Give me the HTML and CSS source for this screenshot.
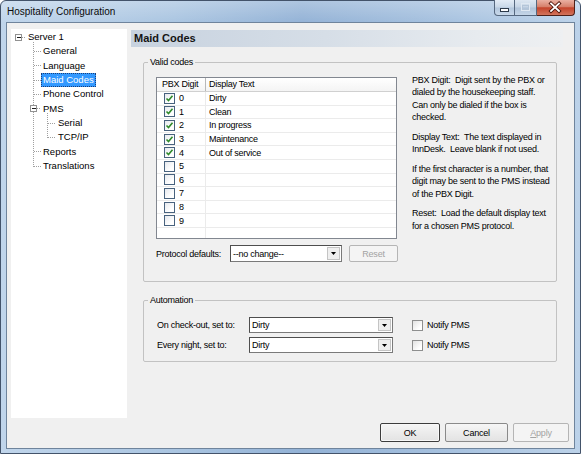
FILE: index.html
```html
<!DOCTYPE html>
<html>
<head>
<meta charset="utf-8">
<title>Hospitality Configuration</title>
<link rel="stylesheet" href="styles.css">
</head>
<body>
<div class="window">
  <div class="titlebar">
    <span class="title">Hospitality Configuration</span>
    <div class="caption-buttons">
      <span class="cb cb-min"><svg width="19" height="15" viewBox="0 0 19 15"><rect x="5.5" y="8.5" width="8" height="3" fill="#fff" stroke="#2d3a4a"/></svg></span>
      <span class="cb cb-max"><svg width="21" height="15" viewBox="0 0 21 15"><rect x="6.5" y="3.5" width="8" height="7" fill="none" stroke="#dfe8f2"/><rect x="7.5" y="5.5" width="6" height="4" fill="none" stroke="#b4c5d8"/></svg></span>
      <span class="cb cb-close"><svg width="37" height="15" viewBox="0 0 37 15"><path d="M14 3.5 L22 11 M22 3.5 L14 11" stroke="#4b1208" stroke-width="3.6" stroke-linecap="square"/><path d="M14 3.5 L22 11 M22 3.5 L14 11" stroke="#fff" stroke-width="1.8" stroke-linecap="square"/></svg></span>
    </div>
  </div>
  <div class="client">
    <div class="top">
      <div class="tree">
        <svg class="tree-lines" width="116" height="160" viewBox="0 0 116 160" shape-rendering="crispEdges">
          <g stroke="#a0a0a0" stroke-dasharray="1 1" fill="none">
            <line x1="11" y1="8.5" x2="15" y2="8.5"/>
            <line x1="22.5" y1="13" x2="22.5" y2="138"/>
            <line x1="23" y1="22.5" x2="30" y2="22.5"/>
            <line x1="23" y1="36.5" x2="30" y2="36.5"/>
            <line x1="23" y1="51.5" x2="30" y2="51.5"/>
            <line x1="23" y1="65.5" x2="30" y2="65.5"/>
            <line x1="26" y1="79.5" x2="30" y2="79.5"/>
            <line x1="23" y1="122.5" x2="30" y2="122.5"/>
            <line x1="23" y1="137.5" x2="30" y2="137.5"/>
            <line x1="36.5" y1="84" x2="36.5" y2="109"/>
            <line x1="37" y1="94.5" x2="45" y2="94.5"/>
            <line x1="37" y1="108.5" x2="45" y2="108.5"/>
          </g>
          <rect x="4.5" y="5.5" width="6" height="6" fill="#fff" stroke="#929292"/>
          <line x1="6" y1="8.5" x2="10" y2="8.5" stroke="#1e1e1e"/>
          <rect x="19.5" y="76.5" width="6" height="6" fill="#fff" stroke="#929292"/>
          <line x1="21" y1="79.5" x2="25" y2="79.5" stroke="#1e1e1e"/>
        </svg>
        <div class="node l0"><span class="lbl">Server 1</span></div>
        <div class="node l1"><span class="lbl">General</span></div>
        <div class="node l1"><span class="lbl">Language</span></div>
        <div class="node l1 sel"><span class="lbl">Maid Codes</span></div>
        <div class="node l1"><span class="lbl">Phone Control</span></div>
        <div class="node l1"><span class="lbl">PMS</span></div>
        <div class="node l2"><span class="lbl">Serial</span></div>
        <div class="node l2"><span class="lbl">TCP/IP</span></div>
        <div class="node l1"><span class="lbl">Reports</span></div>
        <div class="node l1"><span class="lbl">Translations</span></div>
      </div>
      <div class="main">
        <div class="page-header">Maid Codes</div>
        <fieldset class="group">
          <legend>Valid codes</legend>
          <div class="valid-body">
            <div class="left-col">
              <div class="grid">
                <div class="grid-head"><div class="c1">PBX Digit</div><div class="c2">Display Text</div></div>
                <div class="grid-row"><div class="c1"><span class="chk on"><svg width="9" height="9" viewBox="0 0 9 9"><polyline points="1.5,4.5 3.5,6.5 7.5,1.8" fill="none" stroke="#2f8a2a" stroke-width="1.6"/></svg></span><span>0</span></div><div class="c2">Dirty</div></div>
                <div class="grid-row"><div class="c1"><span class="chk on"><svg width="9" height="9" viewBox="0 0 9 9"><polyline points="1.5,4.5 3.5,6.5 7.5,1.8" fill="none" stroke="#2f8a2a" stroke-width="1.6"/></svg></span><span>1</span></div><div class="c2">Clean</div></div>
                <div class="grid-row"><div class="c1"><span class="chk on"><svg width="9" height="9" viewBox="0 0 9 9"><polyline points="1.5,4.5 3.5,6.5 7.5,1.8" fill="none" stroke="#2f8a2a" stroke-width="1.6"/></svg></span><span>2</span></div><div class="c2">In progress</div></div>
                <div class="grid-row"><div class="c1"><span class="chk on"><svg width="9" height="9" viewBox="0 0 9 9"><polyline points="1.5,4.5 3.5,6.5 7.5,1.8" fill="none" stroke="#2f8a2a" stroke-width="1.6"/></svg></span><span>3</span></div><div class="c2">Maintenance</div></div>
                <div class="grid-row"><div class="c1"><span class="chk on"><svg width="9" height="9" viewBox="0 0 9 9"><polyline points="1.5,4.5 3.5,6.5 7.5,1.8" fill="none" stroke="#2f8a2a" stroke-width="1.6"/></svg></span><span>4</span></div><div class="c2">Out of service</div></div>
                <div class="grid-row"><div class="c1"><span class="chk"></span><span>5</span></div><div class="c2"></div></div>
                <div class="grid-row"><div class="c1"><span class="chk"></span><span>6</span></div><div class="c2"></div></div>
                <div class="grid-row"><div class="c1"><span class="chk"></span><span>7</span></div><div class="c2"></div></div>
                <div class="grid-row"><div class="c1"><span class="chk"></span><span>8</span></div><div class="c2"></div></div>
                <div class="grid-row"><div class="c1"><span class="chk"></span><span>9</span></div><div class="c2"></div></div>
                <div class="grid-row empty"><div class="c1"></div><div class="c2"></div></div>
              </div>
              <div class="proto-row">
                <span class="proto-label">Protocol defaults:</span>
                <div class="combo proto-combo"><span class="combo-text">--no change--</span><span class="combo-btn"><svg width="5" height="3" viewBox="0 0 5 3"><polygon points="0,0 5,0 2.5,3" fill="#000"/></svg></span></div>
                <button class="btn reset" disabled>Reset</button>
              </div>
            </div>
            <div class="help"><p>PBX Digit:  Digit sent by the PBX or<br>dialed by the housekeeping staff.<br>Can only be dialed if the box is<br>checked.</p><p>Display Text:  The text displayed in<br>InnDesk.  Leave blank if not used.</p><p>If the first character is a number, that<br>digit may be sent to the PMS instead<br>of the PBX Digit.</p><p>Reset:  Load the default display text<br>for a chosen PMS protocol.</p></div>
          </div>
        </fieldset>
        <fieldset class="group automation">
          <legend>Automation</legend>
          <div class="auto-body">
            <div class="auto-row">
              <span class="auto-label">On check-out, set to:</span>
              <div class="combo auto-combo"><span class="combo-text">Dirty</span><span class="combo-btn"><svg width="5" height="3" viewBox="0 0 5 3"><polygon points="0,0 5,0 2.5,3" fill="#000"/></svg></span></div>
              <span class="box"></span><span class="notify">Notify PMS</span>
            </div>
            <div class="auto-row">
              <span class="auto-label">Every night, set to:</span>
              <div class="combo auto-combo"><span class="combo-text">Dirty</span><span class="combo-btn"><svg width="5" height="3" viewBox="0 0 5 3"><polygon points="0,0 5,0 2.5,3" fill="#000"/></svg></span></div>
              <span class="box"></span><span class="notify">Notify PMS</span>
            </div>
          </div>
        </fieldset>
      </div>
    </div>
    <div class="buttons">
      <button class="btn ok">OK</button>
      <button class="btn cancel">Cancel</button>
      <button class="btn apply" disabled><u>A</u>pply</button>
    </div>
  </div>
</div>
</body>
</html>
```
FILE: styles.css
```css
* { box-sizing: border-box; }
html, body { margin: 0; padding: 0; }
body {
  width: 581px;
  height: 454px;
  overflow: hidden;
  background: #ffffff;
  font-family: "Liberation Sans", Arial, sans-serif;
  font-size: 9px;
  letter-spacing: -0.25px;
  color: #000;
}
.window {
  width: 581px;
  height: 454px;
  display: flex;
  flex-direction: column;
  border: 1px solid #43536a;
  border-radius: 6px 6px 0 0;
  padding: 0 5px 4px 5px;
  background:
    linear-gradient(180deg, rgba(255,255,255,0.25) 0px, rgba(255,255,255,0) 22px),
    linear-gradient(90deg, #c0d5eb 0%, #aac5e1 30%, #93b2d6 52%, #a2bedd 72%, #bcd2e9 100%);
}
.titlebar {
  height: 21px;
  display: flex;
  align-items: flex-start;
  justify-content: space-between;
  flex: none;
}
.title {
  font-size: 10px;
  letter-spacing: 0;
  line-height: 21px;
  padding-left: 1px;
  color: #0a0a0a;
}
.caption-buttons {
  display: flex;
  margin-top: -1px;
  height: 16px;
}
.cb {
  display: flex;
  height: 16px;
  border: 1px solid #56687f;
  border-top: none;
  border-left: none;
  align-items: flex-start;
  justify-content: center;
}
.cb-min {
  width: 21px;
  border-left: 1px solid #56687f;
  border-radius: 0 0 0 4px;
  background: linear-gradient(180deg, #e3ecf6 0%, #c9d8e8 48%, #b3c7dd 52%, #c9d9ea 100%);
}
.cb-max {
  width: 22px;
  background: linear-gradient(180deg, #dde7f2 0%, #c5d4e5 48%, #b0c3d9 52%, #c5d6e8 100%);
}
.cb-close {
  width: 38px;
  border-color: #4e2018;
  border-radius: 0 0 4px 0;
  background: linear-gradient(180deg, #eab0a2 0%, #d6806b 45%, #c4442b 52%, #d2745c 100%);
}
.client {
  flex: 1;
  border: 1px solid #6f849c;
  background: #f0f0f0;
  padding: 6px 5px 6px 4px;
  display: flex;
  flex-direction: column;
  gap: 5px;
}
.top {
  height: 389px;
  display: flex;
  gap: 4px;
  flex: none;
}
.tree {
  width: 116px;
  height: 389px;
  background: #fff;
  position: relative;
  padding-top: 1px;
  font-size: 9.5px;
  letter-spacing: 0;
}
.tree-lines {
  position: absolute;
  left: 0;
  top: 0;
}
.node {
  height: 14.33px;
  display: flex;
  align-items: center;
  position: relative;
}
.node.l0 { padding-left: 15px; }
.node.l1 { padding-left: 30px; }
.node.l2 { padding-left: 45px; }
.lbl {
  display: block;
  padding: 0 2px;
  line-height: 14px;
  height: 14px;
  color: #000;
}
.node.sel .lbl {
  background: #3399ff;
  color: #fff;
  outline: 1px dotted #1b3f7a;
  outline-offset: -1px;
}
.main {
  flex: 1;
  display: flex;
  flex-direction: column;
}
.page-header {
  margin-top: 1px;
  width: 432px;
  height: 17px;
  padding-left: 3px;
  line-height: 17px;
  font-size: 11px;
  font-weight: bold;
  letter-spacing: 0;
  color: #141414;
  background: linear-gradient(90deg, #c7d2df 0%, #d6dee7 45%, #e7ebef 80%, #eef0f2 100%);
}
.group {
  margin: 9px 12px 0 12px;
  padding: 0;
  min-width: 0;
  border: 1px solid #c2c2c2;
  border-radius: 2px;
}
.group.automation { margin-top: 12px; }
.group legend {
  margin-left: 4px;
  padding: 0 2px;
  line-height: 12px;
  font-size: 9px;
}
.valid-body {
  display: flex;
  align-items: flex-start;
  gap: 14px;
  padding: 9px 0 18px 12px;
}
.left-col {
  width: 242px;
  display: flex;
  flex-direction: column;
  gap: 5px;
}
.grid {
  width: 241px;
  height: 162px;
  border: 1px solid #828790;
  background: #fff;
  display: flex;
  flex-direction: column;
}
.grid-head {
  display: flex;
  height: 14px;
  flex: none;
  border-bottom: 1px solid #d0d0d0;
  background: linear-gradient(180deg, #ffffff, #f4f4f4);
  line-height: 13px;
}
.grid-head .c1 {
  width: 49px;
  padding-left: 5px;
  border-right: 1px solid #b8b8b8;
}
.grid-head .c2 {
  flex: 1;
  padding-left: 3px;
}
.grid-row {
  display: flex;
  height: 13.6px;
  flex: none;
  border-bottom: 1px solid #ebebeb;
}
.grid-row.empty {
  flex: 1;
  border-bottom: none;
}
.grid-row .c1 {
  width: 49px;
  border-right: 1px solid #ebebeb;
  display: flex;
  align-items: center;
  gap: 4px;
  padding-left: 7px;
}
.grid-row .c2 {
  flex: 1;
  padding-left: 3px;
  display: flex;
  align-items: center;
}
.chk {
  width: 11px;
  height: 11px;
  border: 1px solid #48627e;
  background: linear-gradient(135deg, #e6e9ee 0%, #ffffff 70%);
  display: flex;
  align-items: center;
  justify-content: center;
}
.proto-row {
  height: 19px;
  display: flex;
  align-items: center;
}
.proto-label { width: 74px; }
.combo {
  display: flex;
  align-items: center;
  background: #fff;
  border: 1px solid #7a7a7a;
  border-top-color: #4e4e4e;
  border-left-color: #4e4e4e;
  padding-left: 2px;
}
.proto-combo {
  width: 112px;
  height: 17px;
  margin-right: 7px;
}
.combo-text { flex: 1; }
.combo-btn {
  width: 13px;
  height: 13px;
  margin-right: 1px;
  border: 1px solid #c4c4c4;
  background: #efefef;
  display: flex;
  align-items: center;
  justify-content: center;
}
.btn {
  font-family: inherit;
  font-size: 9px;
  letter-spacing: -0.2px;
  color: #000;
  padding: 0;
  border: 1px solid #8a8a8a;
  border-radius: 2px;
  background: linear-gradient(180deg, #f6f6f6 0%, #ececec 50%, #e3e3e3 100%);
}
.btn.reset {
  width: 49px;
  height: 17px;
  color: #a3a3a3;
  border-color: #b5b5b5;
  background: #f4f4f4;
}
.help {
  margin-top: -3px;
  line-height: 12.3px;
}
.help p {
  margin: 0 0 7.6px 0;
  white-space: pre;
}
.auto-body {
  padding: 11px 0 8px 13px;
  display: flex;
  flex-direction: column;
  gap: 4px;
}
.auto-row {
  height: 16px;
  display: flex;
  align-items: center;
}
.auto-label { width: 92px; }
.auto-combo {
  width: 144px;
  height: 16px;
  margin-right: 19px;
}
.auto-combo .combo-btn { height: 12px; }
.box {
  width: 11px;
  height: 11px;
  border: 1px solid #8e8f8f;
  background: linear-gradient(135deg, #e2e2e2 0%, #ffffff 75%);
  margin-right: 4px;
}
.buttons {
  height: 19px;
  display: flex;
  justify-content: flex-end;
  gap: 5px;
  flex: none;
}
.buttons .btn { height: 19px; }
.btn.ok { width: 60px; border-color: #3d3d3d; box-shadow: inset 0 0 0 1px #f8f8f8; }
.btn.cancel { width: 63px; }
.btn.apply { width: 56px; color: #a3a3a3; border-color: #b5b5b5; background: #f4f4f4; }
```
